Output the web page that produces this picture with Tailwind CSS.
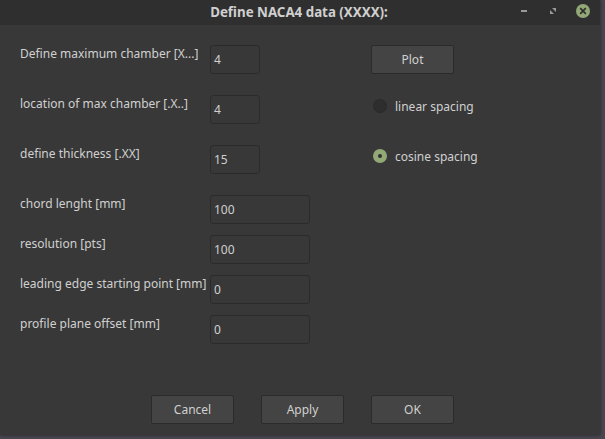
<!DOCTYPE html>
<html lang="en">
<head>
<meta charset="utf-8">
<title>Define NACA4 data</title>
<script src="https://cdn.jsdelivr.net/npm/@tailwindcss/browser@4"></script>
</head>
<body class="h-[439px] w-[605px] overflow-hidden bg-[#49464f] font-['Noto_Sans',sans-serif] text-[12px] leading-4 text-[#d0d0d0]">
<div class="flex h-[435px] w-[600px] flex-col bg-[#383838] shadow-[0_0_3px_#222222]">
  <header class="relative flex h-[25px] shrink-0 items-center justify-center bg-[#2f2f2f]">
    <h1 class="-mt-px pr-[2px] text-[13.33px] font-bold whitespace-nowrap">Define NACA4 data (XXXX):</h1>
    <div class="absolute top-0 right-[10px] flex h-[22px] items-center gap-[23px]">
      <svg class="-mr-[1px] ml-0 h-[6px] w-[7px] -translate-x-[1px]" viewBox="0 0 7 6"><path d="M1 2h6v2H1z" fill="#999999"/></svg>
      <svg class="h-[6px] w-[6px]" viewBox="0 0 6 6"><path d="M2 0h4v4zM0 2l4 4H0z" fill="#999999"/></svg>
      <svg class="-ml-[3px] h-[14px] w-[14px]" viewBox="0 0 14 14"><circle cx="7" cy="7" r="7" fill="#92a876"/><path d="M4.2 4.2l5.6 5.6M9.8 4.2l-5.6 5.6" stroke="#2f2f2f" stroke-width="1.7"/></svg>
    </div>
  </header>
  <main class="flex h-[350px] pt-5 pl-5">
    <form class="w-[351px]">
      <div class="flex h-[50px]"><label class="w-[190px] pt-px whitespace-nowrap">Define maximum chamber [X...]</label><div class="flex h-[29px] w-[50px] items-center rounded-[3px] border border-[#2b2b2b] pl-[3px]">4</div></div>
      <div class="flex h-[50px]"><label class="w-[190px] pt-px whitespace-nowrap">location of max chamber [.X..]</label><div class="flex h-[29px] w-[50px] items-center rounded-[3px] border border-[#2b2b2b] pl-[3px]">4</div></div>
      <div class="flex h-[50px]"><label class="w-[190px] pt-px whitespace-nowrap">define thickness [.XX]</label><div class="flex h-[29px] w-[50px] items-center rounded-[3px] border border-[#2b2b2b] pl-[3px]">15</div></div>
      <div class="flex h-[40px]"><label class="w-[190px] pt-px whitespace-nowrap">chord lenght [mm]</label><div class="flex h-[29px] w-[100px] items-center rounded-[3px] border border-[#2b2b2b] pl-[3px]">100</div></div>
      <div class="flex h-[40px]"><label class="w-[190px] pt-px whitespace-nowrap">resolution [pts]</label><div class="flex h-[29px] w-[100px] items-center rounded-[3px] border border-[#2b2b2b] pl-[3px]">100</div></div>
      <div class="flex h-[40px]"><label class="w-[190px] pt-px whitespace-nowrap">leading edge starting point [mm]</label><div class="flex h-[29px] w-[100px] items-center rounded-[3px] border border-[#2b2b2b] pl-[3px]">0</div></div>
      <div class="flex h-[40px]"><label class="w-[190px] pt-px whitespace-nowrap">profile plane offset [mm]</label><div class="flex h-[29px] w-[100px] items-center rounded-[3px] border border-[#2b2b2b] pl-[3px]">0</div></div>
    </form>
    <aside>
      <button type="button" class="mb-[24px] block h-[29px] w-[83px] rounded-[2px] border border-[#2b2b2b] bg-[#444444]">Plot</button>
      <div class="mb-[34px] flex h-4 items-center gap-2 pl-[2px]"><svg class="h-[14px] w-[14px]" viewBox="0 0 14 14"><circle cx="7" cy="7" r="6.5" fill="#2e2e2e" stroke="#2a2a2a"/></svg><span class="pt-[2px]">linear spacing</span></div>
      <div class="flex h-4 items-center gap-2 pl-[2px]"><svg class="h-[14px] w-[14px]" viewBox="0 0 14 14"><circle cx="7" cy="7" r="7" fill="#92a876"/><circle cx="7" cy="7" r="2" fill="#2f2f2f"/></svg><span class="pt-[2px]">cosine spacing</span></div>
    </aside>
  </main>
  <footer class="flex gap-[27px] pt-[20px] pl-[151px]">
    <button class="h-[29px] w-[83px] rounded-[2px] border border-[#2b2b2b] bg-[#444444]">Cancel</button>
    <button class="h-[29px] w-[83px] rounded-[2px] border border-[#2b2b2b] bg-[#444444]">Apply</button>
    <button class="h-[29px] w-[83px] rounded-[2px] border border-[#2b2b2b] bg-[#444444]">OK</button>
  </footer>
</div>
</body>
</html>
